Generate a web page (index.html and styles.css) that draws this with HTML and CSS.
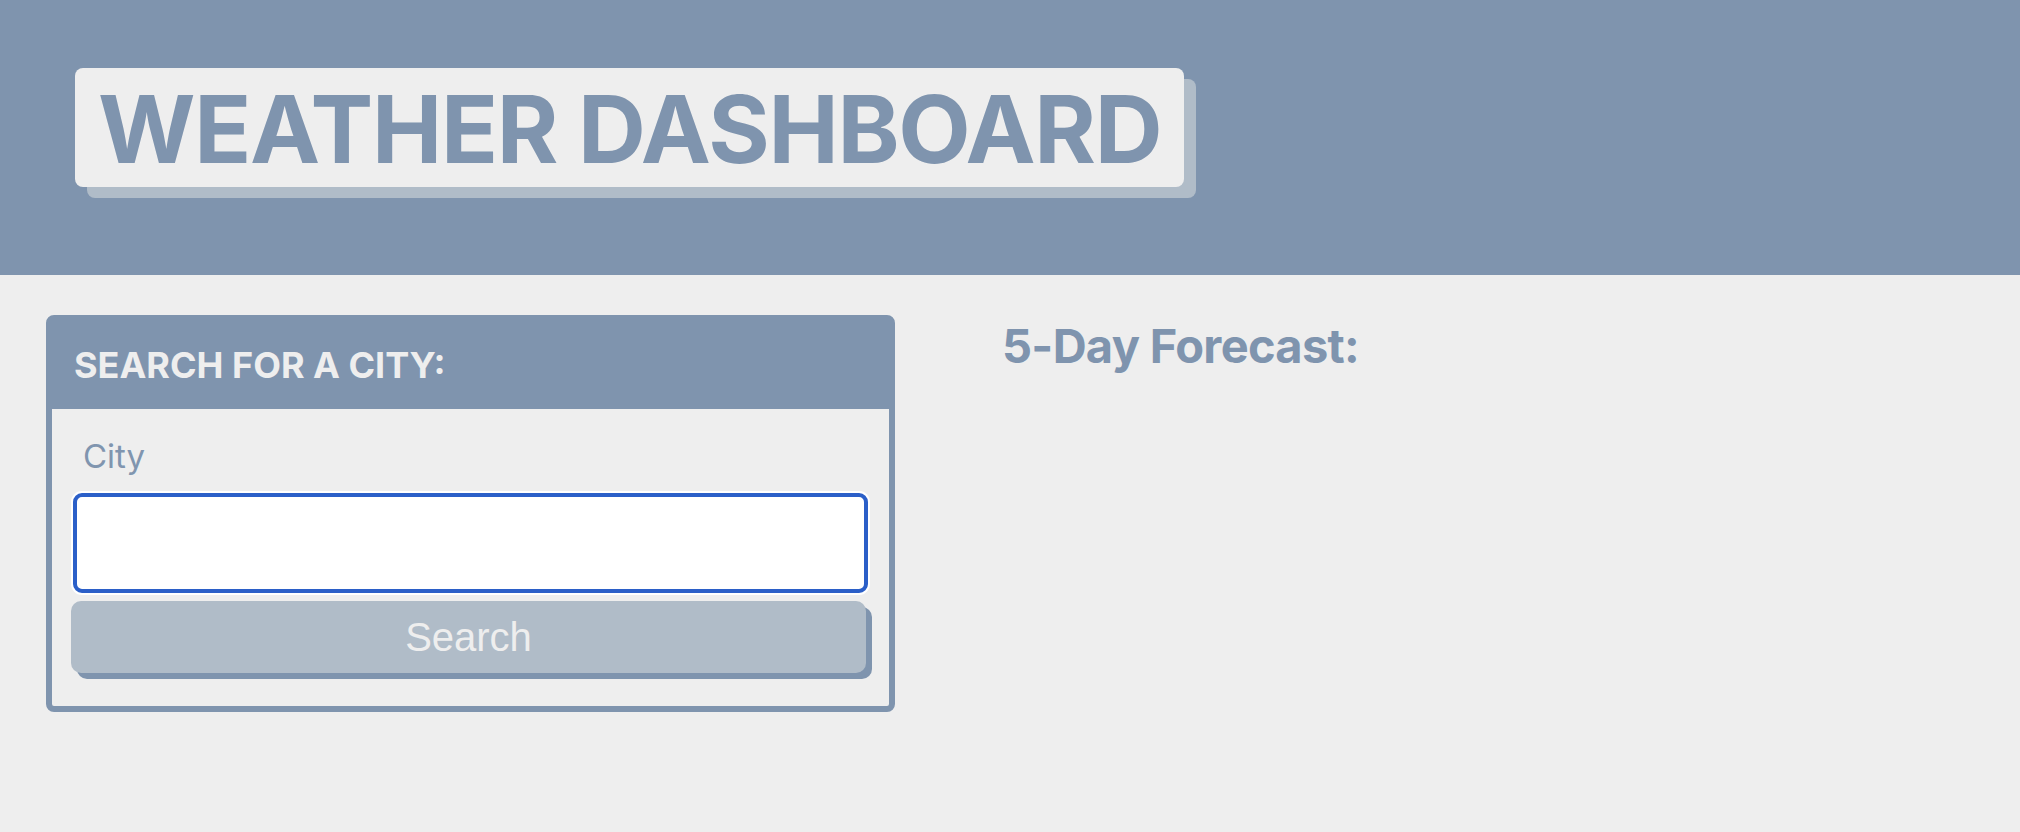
FILE: index.html
```html
<!DOCTYPE html>
<html lang="en">
<head>
<meta charset="utf-8">
<title>Weather Dashboard</title>
<link rel="stylesheet" href="styles.css">
</head>
<body>
<header class="top">
  <h1 class="brand">WEATHER DASHBOARD</h1>
</header>
<main class="main">
  <section class="card">
    <h2 class="card-head">SEARCH FOR A CITY:</h2>
    <form class="card-body">
      <label class="label" for="city">City</label>
      <input class="input" id="city" type="text">
      <button class="btn" type="button">Search</button>
    </form>
  </section>
  <section class="forecast">
    <h2 class="forecast-title">5-Day Forecast:</h2>
  </section>
</main>
</body>
</html>
```
FILE: styles.css
```css
* { box-sizing: border-box; }
html, body { margin: 0; padding: 0; }
body {
  background: #eeeeee;
  font-family: Inter, "Noto Sans", sans-serif;
  color: #7f94ae;
}
.top {
  background: #7f94ae;
  height: 275px;
  padding: 68px 0 0 75px;
}
.brand {
  display: inline-block;
  margin: 0;
  background: #eeeeee;
  color: #7f94ae;
  font-size: 94px;
  font-weight: 700;
  line-height: 113px;
  padding: 5px 23px 1px 23px;
  border-radius: 8px;
  box-shadow: 12px 11px 0 #b0bcc8;
  letter-spacing: -1.3px;
}
.main {
  display: flex;
  align-items: flex-start;
  padding: 40px 0 0 46px;
}
.card {
  width: 849px;
  border: 6px solid #7f94ae;
  border-radius: 8px;
  background: #eeeeee;
}
.card-head {
  margin: 0;
  background: #7f94ae;
  color: #eeeeee;
  font-size: 36px;
  font-weight: 700;
  line-height: 87px;
  padding: 1px 0 0 22px;
  height: 88px;
}
.card-body {
  display: flex;
  flex-direction: column;
  padding: 27px 21px 33px 21px;
  margin: 0;
}
.label {
  font-size: 33px;
  line-height: 40px;
  padding-left: 10px;
  color: #8095af;
}
.input {
  margin-top: 17px;
  height: 100px;
  width: 795px;
  border: 4px solid #2b5fc8;
  border-radius: 9px;
  background: #ffffff;
  box-shadow: 0 0 0 2px #ffffff;
  outline: none;
}
.btn {
  margin-top: 8px;
  margin-left: -2px;
  width: 795px;
  height: 72px;
  border: none;
  border-radius: 10px;
  background: #b0bcc8;
  box-shadow: 6px 6px 0 #7f94ae;
  color: #eeeeee;
  font-family: "Liberation Sans", Arial, sans-serif;
  font-size: 40px;
  line-height: 72px;
  padding: 0;
}
.forecast {
  margin-left: 107px;
}
.forecast-title {
  margin: 3px 0 0 0;
  font-size: 47px;
  font-weight: 700;
  line-height: 1.2;
  letter-spacing: -0.7px;
  color: #7f94ae;
}
```
